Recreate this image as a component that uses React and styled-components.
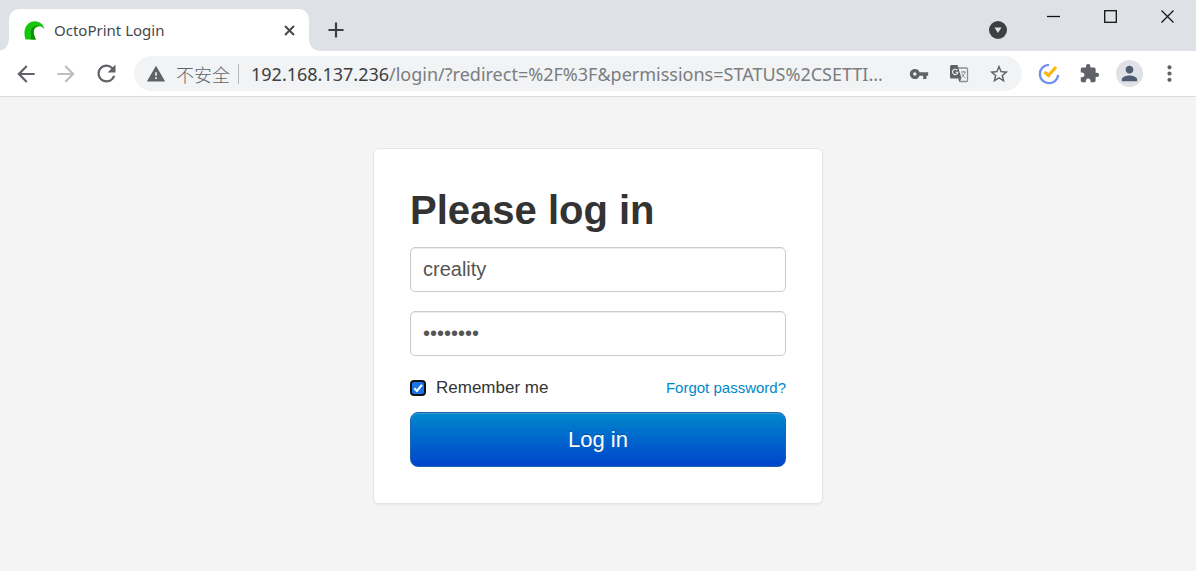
import React, { useState } from "react";
import styled, { createGlobalStyle } from "styled-components";
import {
  MdArrowBack,
  MdArrowForward,
  MdRefresh,
  MdWarning,
  MdVpnKey,
  MdStarBorder,
  MdExtension,
  MdPerson,
  MdMoreVert,
  MdAdd,
} from "react-icons/md";

const GlobalStyle = createGlobalStyle`
  *, *::before, *::after {
    box-sizing: border-box;
  }
  body {
    margin: 0;
    background: #f4f4f4;
    font-family: "Liberation Sans", Arial, sans-serif;
  }
  button, input {
    font-family: inherit;
  }
`;

const Browser = styled.div`
  min-height: 100vh;
  display: flex;
  flex-direction: column;
  overflow: hidden;
`;

const TabStrip = styled.header`
  display: flex;
  align-items: flex-end;
  padding-left: 9px;
  height: 51px;
  background: #dee1e6;
  font-family: "Noto Sans", "Open Sans", sans-serif;
`;

const Tab = styled.div`
  position: relative;
  display: flex;
  align-items: center;
  gap: 9px;
  width: 300px;
  height: 42px;
  padding: 0 8px 0 15px;
  background: #fff;
  border-radius: 10px 10px 0 0;
  color: #45494d;

  &::before,
  &::after {
    content: "";
    position: absolute;
    bottom: 0;
    width: 10px;
    height: 10px;
  }
  &::before {
    left: -10px;
    background: radial-gradient(circle at 0 0, transparent 9px, #fff 10px);
  }
  &::after {
    right: -10px;
    background: radial-gradient(circle at 100% 0, transparent 9px, #fff 10px);
  }
`;

const TabTitle = styled.span`
  flex: 1;
  font-size: 15px;
  line-height: 20px;
  white-space: nowrap;
`;

const IconButton = styled.button`
  display: flex;
  align-items: center;
  justify-content: center;
  flex: none;
  width: ${({ $width }) => $width || 40}px;
  height: ${({ $height }) => $height || 35}px;
  padding: 0;
  border: none;
  background: transparent;
  color: ${({ $color }) => $color || "#5f6368"};
  cursor: pointer;
`;

const NewTab = styled(IconButton)`
  margin-left: 9px;
  height: 42px;
`;

const WindowControls = styled.div`
  display: flex;
  align-self: stretch;
  align-items: flex-start;
  margin-left: auto;
`;

const TabSearch = styled(IconButton)`
  align-self: flex-end;
  margin-right: 7px;
  height: 42px;
`;

const Toolbar = styled.nav`
  display: flex;
  align-items: center;
  height: 46px;
  padding: 0 7px 0 6px;
  background: #fff;
  border-bottom: 1px solid #dcdddf;
`;

const Omnibox = styled.div`
  display: flex;
  align-items: center;
  flex: 1;
  min-width: 0;
  height: 35px;
  margin: 0 7px 0 8px;
  padding: 0 3px 0 12px;
  border-radius: 18px;
  background: #f1f3f4;
  color: #5f6368;
  font-family: "Noto Sans", "Noto Sans CJK SC", sans-serif;
`;

const Security = styled.span`
  margin-left: 10px;
  padding-right: 8px;
  border-right: 1px solid #b4b7ba;
  font-family: "Noto Sans CJK SC", sans-serif;
  font-weight: 300;
  font-size: 18px;
  line-height: 20px;
  white-space: nowrap;
`;

const Url = styled.span`
  flex: 1;
  min-width: 0;
  margin-left: 12px;
  overflow: hidden;
  font-size: 18px;
  line-height: 26px;
  white-space: nowrap;
  color: #7a7d81;
`;

const Host = styled.span`
  color: #3c4043;
`;

const Avatar = styled.span`
  display: flex;
  align-items: center;
  justify-content: center;
  width: 27px;
  height: 27px;
  border-radius: 50%;
  background: #dee1e6;
  color: #4f5b70;
`;

const Page = styled.main`
  flex: 1;
  display: flex;
  justify-content: center;
  align-items: flex-start;
  padding: 51px 20px;
`;

const Card = styled.form`
  width: 100%;
  max-width: 450px;
  padding: 36px;
  background: #fff;
  border: 1px solid #e5e5e5;
  border-radius: 6px;
  box-shadow: 0 1px 2px rgba(0, 0, 0, 0.05);
  color: #333;
`;

const Title = styled.h1`
  margin: 0 0 12px;
  font-size: 40px;
  font-weight: 700;
  line-height: 50px;
`;

const Field = styled.input`
  display: block;
  width: 100%;
  height: 45px;
  margin-bottom: 19px;
  padding: 8px 12px;
  border: 1px solid #ccc;
  border-radius: 5px;
  background: #fff;
  box-shadow: inset 0 1px 1px rgba(0, 0, 0, 0.075);
  color: #555;
  font-size: 20px;
  outline: none;
`;

const Options = styled.div`
  display: flex;
  align-items: center;
  justify-content: space-between;
  height: 25px;
  margin-bottom: 12px;
`;

const Remember = styled.label`
  display: flex;
  align-items: center;
  gap: 10px;
  font-size: 17px;
  line-height: 24px;
`;

const CheckWrap = styled.span`
  position: relative;
  display: flex;

  svg {
    position: absolute;
    inset: 0;
    pointer-events: none;
  }
`;

const Checkbox = styled.input`
  appearance: none;
  width: 16px;
  height: 16px;
  margin: 0;
  border: 2px solid #101418;
  border-radius: 4px;
  background: ${({ checked }) => (checked ? "#1a73e8" : "#fff")};
`;

const Forgot = styled.a`
  color: #0088cc;
  font-size: 15px;
  line-height: 24px;
  text-decoration: none;
`;

const Submit = styled.button`
  display: block;
  width: 100%;
  height: 55px;
  border: 1px solid #1a63b0;
  border-radius: 8px;
  background: linear-gradient(to bottom, #0088cc, #0044cc);
  box-shadow: inset 0 1px 0 rgba(255, 255, 255, 0.2);
  color: #fff;
  font-size: 22px;
  line-height: 26px;
  text-shadow: 0 -1px 0 rgba(0, 0, 0, 0.25);
  cursor: pointer;
`;

const TentacleLogo = () => (
  <svg width="21" height="19" viewBox="0 0 21 19" aria-hidden="true">
    <path
      d="M1.500 18.500C0 14 -0.200 8.500 2.500 4.800C4.800 1.500 8.500 0 12 0.400C16.500 0.900 19.500 3.500 20.300 8C18.500 5.600 16 4.600 13.500 5.400C10.800 6.300 9.300 8.800 9.700 12C10 14.500 11 16.500 12 18.500Z"
      fill="#16c60c"
    />
    <path
      d="M6.500 18.500C8 15 6 11.500 7.500 8.300C9 5.200 12.500 4 16 5.200C11.500 4.900 9.200 8.300 9.700 12C10 14.500 11 16.500 12 18.500Z"
      fill="#0c8f04"
    />
  </svg>
);

const TranslateIcon = () => (
  <svg width="20" height="20" viewBox="0 0 20 20" fill="none" aria-hidden="true">
    <path d="M9 4H17.500Q18.500 4 18.500 5V16.500Q18.500 17.500 17.500 17.500H10.500" stroke="#8c8f93" strokeWidth="1.300" />
    <path d="M2.500 1H8.500L12.500 14.500H2.500Q1 14.500 1 13V2.500Q1 1 2.500 1Z" fill="#5f6368" />
    <path d="M9 14.500H12.500L10.500 18Z" fill="#5f6368" />
    <path d="M8.300 6.200A2.700 2.700 0 1 0 8.900 8.200H6.400" stroke="#f1f3f4" strokeWidth="1.100" />
    <path d="M12 8H17M14.300 6.800V8M16 8C15.500 10.500 14.500 11.800 12.600 13.200M12.800 9.500C13.500 11.500 15 13 16.500 14" stroke="#8c8f93" />
  </svg>
);

const TaskIcon = () => (
  <svg width="22" height="22" viewBox="0 0 22 22" fill="none" aria-hidden="true">
    <path d="M11 1.800A9.200 9.200 0 1 0 20.200 12" stroke="#6f8ff0" strokeWidth="2.300" />
    <path d="M6.500 9L10.500 12.500L18 4" stroke="#ffb60a" strokeWidth="3.200" />
  </svg>
);

const App = () => {
  const [user, setUser] = useState("creality");
  const [password, setPassword] = useState("password");
  const [remember, setRemember] = useState(true);

  return (
    <Browser>
      <GlobalStyle />
      <TabStrip>
        <Tab>
          <TentacleLogo />
          <TabTitle>OctoPrint Login</TabTitle>
          <IconButton $width={24} $height={24} $color="#45494d" aria-label="Close tab">
            <svg width="11" height="11" viewBox="0 0 11 11" stroke="currentColor">
              <path d="M1 1L10 10M10 1L1 10" strokeWidth="2" />
            </svg>
          </IconButton>
        </Tab>
        <NewTab $width={36} $color="#3c4043" aria-label="New tab">
          <MdAdd size={26} />
        </NewTab>
        <WindowControls>
          <TabSearch $color="#3c4043" aria-label="Search tabs">
            <svg width="18" height="18" viewBox="0 0 18 18">
              <circle cx="9" cy="9" r="9" fill="currentColor" />
              <path d="M5.500 6.500H12.500L9 12Z" fill="#dee1e6" />
            </svg>
          </TabSearch>
          <IconButton $width={57} $height={32} $color="#111" aria-label="Minimize">
            <svg width="13" height="13" viewBox="0 0 13 13" stroke="currentColor">
              <path d="M0 6.500H13" strokeWidth="1.300" />
            </svg>
          </IconButton>
          <IconButton $width={57} $height={32} $color="#111" aria-label="Maximize">
            <svg width="13" height="13" viewBox="0 0 13 13" fill="none" stroke="currentColor">
              <rect x="0.700" y="0.700" width="11.600" height="11.600" strokeWidth="1.300" />
            </svg>
          </IconButton>
          <IconButton $width={57} $height={32} $color="#111" aria-label="Close">
            <svg width="13" height="13" viewBox="0 0 13 13" stroke="currentColor">
              <path d="M0.500 0.500L12.500 12.500M12.500 0.500L0.500 12.500" strokeWidth="1.200" />
            </svg>
          </IconButton>
        </WindowControls>
      </TabStrip>

      <Toolbar>
        <IconButton aria-label="Back">
          <MdArrowBack size={26} />
        </IconButton>
        <IconButton $color="#bcbec1" aria-label="Forward">
          <MdArrowForward size={26} />
        </IconButton>
        <IconButton aria-label="Reload">
          <MdRefresh size={27} />
        </IconButton>
        <Omnibox>
          <MdWarning size={20} />
          <Security>不安全</Security>
          <Url>
            <Host>192.168.137.236</Host>
            /login/?redirect=%2F%3F&amp;permissions=STATUS%2CSETTI...
          </Url>
          <IconButton aria-label="Saved passwords">
            <MdVpnKey size={20} />
          </IconButton>
          <IconButton aria-label="Translate">
            <TranslateIcon />
          </IconButton>
          <IconButton aria-label="Bookmark">
            <MdStarBorder size={22} />
          </IconButton>
        </Omnibox>
        <IconButton aria-label="Tasks">
          <TaskIcon />
        </IconButton>
        <IconButton aria-label="Extensions">
          <MdExtension size={21} />
        </IconButton>
        <IconButton aria-label="Profile">
          <Avatar>
            <MdPerson size={23} />
          </Avatar>
        </IconButton>
        <IconButton aria-label="Menu">
          <MdMoreVert size={25} />
        </IconButton>
      </Toolbar>

      <Page>
        <Card onSubmit={(e) => e.preventDefault()}>
          <Title>Please log in</Title>
          <Field
            type="text"
            aria-label="Username"
            value={user}
            onChange={(e) => setUser(e.target.value)}
          />
          <Field
            type="password"
            aria-label="Password"
            value={password}
            onChange={(e) => setPassword(e.target.value)}
          />
          <Options>
            <Remember>
              <CheckWrap>
                <Checkbox
                  type="checkbox"
                  checked={remember}
                  onChange={(e) => setRemember(e.target.checked)}
                />
                {remember && (
                  <svg width="16" height="16" viewBox="0 0 15 15" fill="none">
                    <path d="M4 7.800L6.500 10.300L11.200 4.500" stroke="#fff" strokeWidth="2" />
                  </svg>
                )}
              </CheckWrap>
              Remember me
            </Remember>
            <Forgot href="#forgot">Forgot password?</Forgot>
          </Options>
          <Submit type="submit">Log in</Submit>
        </Card>
      </Page>
    </Browser>
  );
};

export default App;
